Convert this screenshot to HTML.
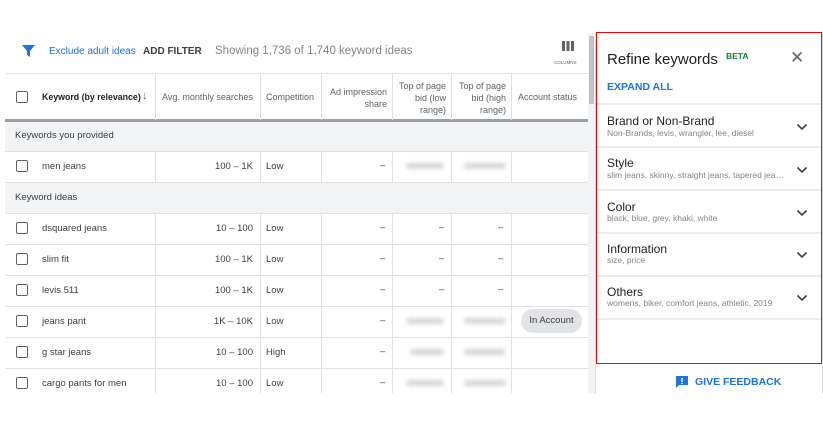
<!DOCTYPE html>
<html><head><style>
*{box-sizing:border-box;margin:0;padding:0}
body{width:823px;height:425px;background:#fff;font-family:"Liberation Sans",sans-serif;position:relative;overflow:hidden;color:#3c4043}
.a{position:absolute;white-space:nowrap}
.hl{position:absolute;left:5px;width:583px;height:1px;background:#e0e0e0}
.vl{position:absolute;width:1px;background:#e0e0e0}
.cb{position:absolute;left:16px;width:12px;height:12px;border:1.6px solid #5f6368;border-radius:2px}
.t{font-size:9.5px;color:#3c4043}
.h{font-size:9px;color:#5f6368}
.bl{position:absolute;height:6px;background:#d4d6d9;filter:blur(2px);border-radius:3px}
.ri{position:absolute;left:597px;width:224px;border-top:2px solid #ececec}
.rt{font-size:12px;color:#202124}
.rs{font-size:8.5px;color:#80868b}
</style></head><body>
<svg class="a" style="left:22px;top:45px" width="13" height="12" viewBox="0 0 13 12"><path d="M0 0H13L8 6V12L5 10V6Z" fill="#1a73e8"/></svg>
<div class="a" style="left:49px;top:46px;font-size:10px;color:#1a73e8">Exclude adult ideas</div>
<div class="a" style="left:143px;top:46px;font-size:10px;font-weight:bold;color:#3c4043">ADD FILTER</div>
<div class="a" style="left:215px;top:45px;font-size:11.5px;color:#80868b">Showing 1,736 of 1,740 keyword ideas</div>
<div class="a" style="left:562px;top:41px;width:12px;height:10px;background:repeating-linear-gradient(90deg,#5f6368 0 3px,transparent 3px 4.5px)"></div>
<div class="a" style="left:554px;top:60px;font-size:4.5px;color:#5f6368">COLUMNS</div>
<div class="a" style="left:588px;top:33px;width:7px;height:360px;background:#f1f3f4"></div>
<div class="a" style="left:589px;top:36px;width:5px;height:68px;background:#c1c3c6"></div>
<div class="hl" style="top:73px"></div>
<div class="a" style="left:5px;top:119px;width:583px;height:3px;background:#9aa0a6"></div>
<div class="a" style="left:5px;top:122px;width:583px;height:29px;background:#f1f3f4"></div>
<div class="a" style="left:5px;top:183px;width:583px;height:30px;background:#f1f3f4"></div>
<div class="hl" style="top:151px"></div><div class="hl" style="top:182px"></div><div class="hl" style="top:213px"></div>
<div class="hl" style="top:244px"></div><div class="hl" style="top:275px"></div><div class="hl" style="top:306px"></div>
<div class="hl" style="top:337px"></div><div class="hl" style="top:368px"></div>
<div class="vl" style="left:155px;top:73px;height:47px"></div><div class="vl" style="left:260px;top:73px;height:47px"></div><div class="vl" style="left:321px;top:73px;height:47px"></div><div class="vl" style="left:392px;top:73px;height:47px"></div><div class="vl" style="left:451px;top:73px;height:47px"></div><div class="vl" style="left:511px;top:73px;height:47px"></div>
<div class="vl" style="left:155px;top:151px;height:31px"></div><div class="vl" style="left:260px;top:151px;height:31px"></div><div class="vl" style="left:321px;top:151px;height:31px"></div><div class="vl" style="left:392px;top:151px;height:31px"></div><div class="vl" style="left:451px;top:151px;height:31px"></div><div class="vl" style="left:511px;top:151px;height:31px"></div>
<div class="vl" style="left:155px;top:213px;height:180px"></div><div class="vl" style="left:260px;top:213px;height:180px"></div><div class="vl" style="left:321px;top:213px;height:180px"></div><div class="vl" style="left:392px;top:213px;height:180px"></div><div class="vl" style="left:451px;top:213px;height:180px"></div><div class="vl" style="left:511px;top:213px;height:180px"></div>
<div class="cb" style="top:91px"></div>
<div class="a" style="left:42px;top:92px;font-size:8.8px;font-weight:bold;color:#202124">Keyword (by relevance)</div>
<div class="a" style="left:142px;top:90px;font-size:11px;color:#5f6368">↓</div>
<div class="a h" style="left:162px;top:92px">Avg. monthly searches</div>
<div class="a h" style="left:266px;top:92px">Competition</div>
<div class="a h" style="left:324px;top:86px;width:63px;text-align:right;white-space:normal;line-height:12px">Ad impression share</div>
<div class="a h" style="left:394px;top:80px;width:52px;text-align:right;white-space:normal;line-height:12px">Top of page bid (low range)</div>
<div class="a h" style="left:453px;top:80px;width:53px;text-align:right;white-space:normal;line-height:12px">Top of page bid (high range)</div>
<div class="a h" style="left:518px;top:92px">Account status</div>
<div class="a t" style="left:15px;top:130px">Keywords you provided</div>
<div class="a t" style="left:15px;top:192px">Keyword ideas</div>
<div class="cb" style="top:160px"></div><div class="a t" style="left:42px;top:161px">men jeans</div><div class="a t" style="left:200px;top:161px;width:53px;text-align:right">100 – 1K</div><div class="a t" style="left:266px;top:161px">Low</div><div class="a t" style="left:380px;top:160px">–</div><div class="bl" style="left:406px;top:163px;width:38px"></div><div class="bl" style="left:464px;top:163px;width:42px"></div>
<div class="cb" style="top:222px"></div><div class="a t" style="left:42px;top:223px">dsquared jeans</div><div class="a t" style="left:200px;top:223px;width:53px;text-align:right">10 – 100</div><div class="a t" style="left:266px;top:223px">Low</div><div class="a t" style="left:380px;top:222px">–</div><div class="a t" style="left:439px;top:222px">–</div><div class="a t" style="left:498px;top:222px">–</div>
<div class="cb" style="top:253px"></div><div class="a t" style="left:42px;top:254px">slim fit</div><div class="a t" style="left:200px;top:254px;width:53px;text-align:right">100 – 1K</div><div class="a t" style="left:266px;top:254px">Low</div><div class="a t" style="left:380px;top:253px">–</div><div class="a t" style="left:439px;top:253px">–</div><div class="a t" style="left:498px;top:253px">–</div>
<div class="cb" style="top:284px"></div><div class="a t" style="left:42px;top:285px">levis 511</div><div class="a t" style="left:200px;top:285px;width:53px;text-align:right">100 – 1K</div><div class="a t" style="left:266px;top:285px">Low</div><div class="a t" style="left:380px;top:284px">–</div><div class="a t" style="left:439px;top:284px">–</div><div class="a t" style="left:498px;top:284px">–</div>
<div class="cb" style="top:315px"></div><div class="a t" style="left:42px;top:316px">jeans pant</div><div class="a t" style="left:200px;top:316px;width:53px;text-align:right">1K – 10K</div><div class="a t" style="left:266px;top:316px">Low</div><div class="a t" style="left:380px;top:315px">–</div><div class="bl" style="left:406px;top:318px;width:38px"></div><div class="bl" style="left:464px;top:318px;width:42px"></div>
<div class="a" style="left:521px;top:309px;width:61px;height:24px;border-radius:12px;background:#e1e3e6;font-size:9.5px;color:#3c4043;text-align:center;line-height:24px">In Account</div>
<div class="cb" style="top:346px"></div><div class="a t" style="left:42px;top:347px">g star jeans</div><div class="a t" style="left:200px;top:347px;width:53px;text-align:right">10 – 100</div><div class="a t" style="left:266px;top:347px">High</div><div class="a t" style="left:380px;top:346px">–</div><div class="bl" style="left:410px;top:349px;width:34px"></div><div class="bl" style="left:464px;top:349px;width:42px"></div>
<div class="cb" style="top:377px"></div><div class="a t" style="left:42px;top:378px">cargo pants for men</div><div class="a t" style="left:200px;top:378px;width:53px;text-align:right">10 – 100</div><div class="a t" style="left:266px;top:378px">Low</div><div class="a t" style="left:380px;top:377px">–</div><div class="bl" style="left:406px;top:380px;width:38px"></div><div class="bl" style="left:464px;top:380px;width:42px"></div>
<div class="a" style="left:595px;top:32px;width:228px;height:362px;border-left:1px solid #e0e0e0;border-right:1px solid #e0e0e0;background:#fff"></div>
<div class="a" style="left:596px;top:32px;width:226px;height:332px;border:1.5px solid #f00"></div>
<div class="a" style="left:607px;top:51px;font-size:15px;color:#202124">Refine keywords</div>
<div class="a" style="left:726px;top:51px;font-size:8.5px;font-weight:bold;color:#188038">BETA</div>
<div class="a" style="left:790px;top:48px;font-size:17px;color:#5f6368">✕</div>
<div class="a" style="left:607px;top:81px;font-size:10.5px;font-weight:bold;color:#1a73e8">EXPAND ALL</div>
<div class="ri" style="top:103px"></div><div class="ri" style="top:146px"></div><div class="ri" style="top:189px"></div><div class="ri" style="top:232px"></div><div class="ri" style="top:275px"></div><div class="ri" style="top:318px"></div>
<div class="a rt" style="left:607px;top:114px">Brand or Non-Brand</div><div class="a rs" style="left:607px;top:128px">Non-Brands, levis, wrangler, lee, diesel</div>
<div class="a rt" style="left:607px;top:156px">Style</div><div class="a rs" style="left:607px;top:170px">slim jeans, skinny, straight jeans, tapered jea…</div>
<div class="a rt" style="left:607px;top:200px">Color</div><div class="a rs" style="left:607px;top:213px">black, blue, grey, khaki, white</div>
<div class="a rt" style="left:607px;top:242px">Information</div><div class="a rs" style="left:607px;top:255px">size, price</div>
<div class="a rt" style="left:607px;top:285px">Others</div><div class="a rs" style="left:607px;top:298px">womens, biker, comfort jeans, athletic, 2019</div>
<svg class="a" style="left:796px;top:123px" width="12" height="8" viewBox="0 0 12 8"><path d="M1.5 1.5L6 6L10.5 1.5" stroke="#3c4043" stroke-width="1.6" fill="none"/></svg>
<svg class="a" style="left:796px;top:166px" width="12" height="8" viewBox="0 0 12 8"><path d="M1.5 1.5L6 6L10.5 1.5" stroke="#3c4043" stroke-width="1.6" fill="none"/></svg>
<svg class="a" style="left:796px;top:209px" width="12" height="8" viewBox="0 0 12 8"><path d="M1.5 1.5L6 6L10.5 1.5" stroke="#3c4043" stroke-width="1.6" fill="none"/></svg>
<svg class="a" style="left:796px;top:251px" width="12" height="8" viewBox="0 0 12 8"><path d="M1.5 1.5L6 6L10.5 1.5" stroke="#3c4043" stroke-width="1.6" fill="none"/></svg>
<svg class="a" style="left:796px;top:294px" width="12" height="8" viewBox="0 0 12 8"><path d="M1.5 1.5L6 6L10.5 1.5" stroke="#3c4043" stroke-width="1.6" fill="none"/></svg>
<svg class="a" style="left:676px;top:376px" width="12" height="12" viewBox="0 0 12 12"><path d="M0 0H12V9H3L0 12Z" fill="#1a73e8"/><rect x="5.3" y="2" width="1.4" height="4" fill="#fff"/><rect x="5.3" y="6.8" width="1.4" height="1.3" fill="#fff"/></svg>
<div class="a" style="left:695px;top:376px;font-size:10.5px;font-weight:bold;color:#1a73e8">GIVE FEEDBACK</div>
</body></html>
